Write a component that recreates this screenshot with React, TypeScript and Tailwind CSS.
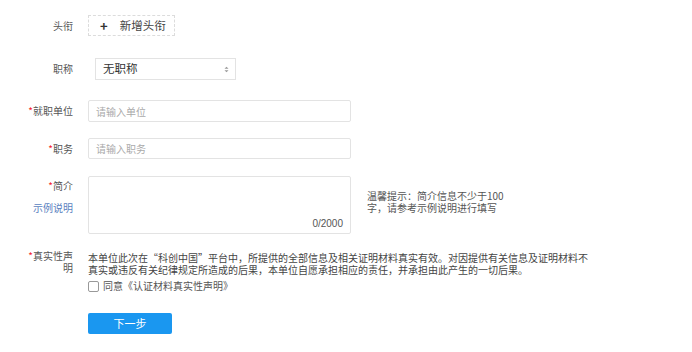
const font = "font-['Noto_Sans_CJK_SC','Liberation_Sans',sans-serif]";

const Req = () => <span className="text-[#f5222d]">*</span>;

const Label = ({ children }: { children: React.ReactNode }) => (
	<div className="w-[45px] shrink-0 text-right text-[10px] leading-[12px] text-[#555]">
		{children}
	</div>
);

export default function App() {
	return (
		<div className={`${font} w-[692px] h-[352px] bg-white pl-[28px] pt-[15px] text-[#444]`}>
			{/* 头衔 */}
			<div className="flex items-center gap-[15px]">
				<Label>头衔</Label>
				<button
					type="button"
					className="flex h-[21px] w-[87px] items-center gap-[12px] border border-dashed border-[#dcdcdc] pl-[11px] text-[11.5px] text-[#444]"
				>
					<span className="text-[13px] leading-none font-bold text-[#333]">+</span>
					<span>新增头衔</span>
				</button>
			</div>

			{/* 职称 */}
			<div className="mt-[22px] flex items-center gap-[15px]">
				<Label>职称</Label>
				<div className="ml-[7px] flex h-[22px] w-[141px] items-center justify-between border border-[#e3e3e3] pl-[7px] pr-[6px] text-[11.5px] text-[#333]">
					<span>无职称</span>
					<svg width="5" height="7" viewBox="0 0 5 7" className="text-[#999]">
						<path d="M0.5 2.8 L2.5 0.8 L4.5 2.8 Z" fill="currentColor" />
						<path d="M0.5 4.2 L2.5 6.2 L4.5 4.2 Z" fill="currentColor" />
					</svg>
				</div>
			</div>

			{/* 就职单位 */}
			<div className="mt-[20px] flex items-center gap-[15px]">
				<Label>
					<Req />
					就职单位
				</Label>
				<div className="flex h-[22px] w-[263px] items-center rounded-[2px] border border-[#e3e3e3] pl-[7px] text-[10px] text-[#aaa]">
					请输入单位
				</div>
			</div>

			{/* 职务 */}
			<div className="mt-[16px] flex items-center gap-[15px]">
				<Label>
					<Req />
					职务
				</Label>
				<div className="flex h-[21px] w-[263px] items-center rounded-[2px] border border-[#e3e3e3] pl-[7px] text-[10px] text-[#aaa]">
					请输入职务
				</div>
			</div>

			{/* 简介 */}
			<div className="mt-[17px] flex items-start gap-[15px]">
				<div className="flex w-[45px] shrink-0 flex-col items-end pt-[4px] text-[10px] leading-[12px]">
					<span className="text-[#555]">
						<Req />
						简介
					</span>
					<span className="mt-[10px] text-[#5b7fc0]">示例说明</span>
				</div>
				<div className="relative h-[58px] w-[263px] rounded-[2px] border border-[#e3e3e3]">
					<span className="absolute bottom-[2px] right-[7px] font-['Liberation_Sans',sans-serif] text-[10px] text-[#555]">
						0/2000
					</span>
				</div>
				<div className="ml-[1px] mt-[14px] text-[10px] leading-[12px] text-[#555]">
					温馨提示：简介信息不少于100
					<br />
					字，请参考示例说明进行填写
				</div>
			</div>

			{/* 真实性声明 */}
			<div className="mt-[16px] flex items-start gap-[15px]">
				<Label>
					<Req />
					真实性声明
				</Label>
				<div className="w-[540px] text-[10px] leading-[12px] text-[#444]">
					<p className="mt-[2px] whitespace-nowrap">
						本单位此次在“科创中国”平台中，所提供的全部信息及相关证明材料真实有效。对因提供有关信息及证明材料不
						<br />
						真实或违反有关纪律规定所造成的后果，本单位自愿承担相应的责任，并承担由此产生的一切后果。
					</p>
					<label className="mt-[4px] flex items-center gap-[4px] text-[#555]">
						<span className="h-[11px] w-[11px] rounded-[2px] border border-[#999]" />
						同意《认证材料真实性声明》
					</label>
				</div>
			</div>

			{/* 下一步 */}
			<div className="mt-[17px] pl-[60px]">
				<button
					type="button"
					className="h-[21px] w-[84px] rounded-[2px] bg-[#1a97f0] text-[11px] text-white"
				>
					下一步
				</button>
			</div>
		</div>
	);
}
